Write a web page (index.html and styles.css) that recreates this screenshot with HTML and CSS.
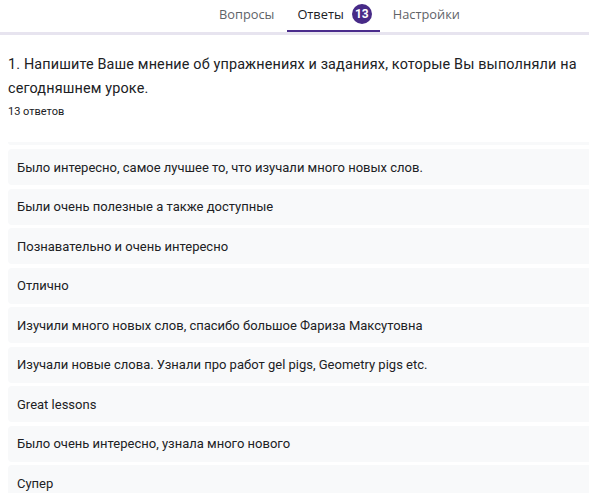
FILE: index.html
```html
<!DOCTYPE html>
<html lang="ru">
<head>
    <meta charset="utf-8">
    <title>Ответы</title>
    <meta name="viewport" content="width=device-width, initial-scale=1">
    <link rel="stylesheet" href="styles.css">
</head>
<body>
    <nav class="tabs">
        <div class="tab">Вопросы</div>
        <div class="tab tab-active">Ответы <span class="badge">13</span></div>
        <div class="tab">Настройки</div>
    </nav>

    <div class="content">
        <div class="question">
            <h2 class="question-title">1. Напишите Ваше мнение об упражнениях и заданиях, которые Вы выполняли на сегодняшнем уроке.</h2>
            <p class="answer-count">13 ответов</p>
        </div>

        <div class="answers">
            <div class="answers-edge"></div>
            <div class="answer">Было интересно, самое лучшее то, что изучали много новых слов.</div>
            <div class="answer">Были очень полезные а также доступные</div>
            <div class="answer">Познавательно и очень интересно</div>
            <div class="answer">Отлично</div>
            <div class="answer">Изучили много новых слов, спасибо большое Фариза Максутовна</div>
            <div class="answer">Изучали новые слова. Узнали про работ gel pigs, Geometry pigs etc.</div>
            <div class="answer">Great lessons</div>
            <div class="answer">Было очень интересно, узнала много нового</div>
            <div class="answer">Супер</div>
        </div>
    </div>
</body>
</html>
```

FILE: styles.css
```css
* {
    margin: 0;
    padding: 0;
    box-sizing: border-box;
}

body {
    font-family: Roboto, 'Liberation Sans', Arial, sans-serif;
    background: #ffffff;
    color: #202124;
    overflow: hidden;
}

.tabs {
    display: flex;
    align-items: stretch;
    gap: 3px;
    height: 35px;
    padding-left: 209px;
    border-bottom: 3px solid #e7e4ef;
}

.tab {
    display: flex;
    align-items: center;
    gap: 8px;
    padding: 0 10px 2px;
    font-family: 'Open Sans', Roboto, sans-serif;
    font-size: 12.8px;
    color: #5f6368;
    border-bottom: 2px solid transparent;
}

.tab-active {
    color: #202124;
    border-bottom-color: #4a2c8c;
    padding-right: 8px;
}

.badge {
    display: inline-flex;
    align-items: center;
    justify-content: center;
    width: 20px;
    height: 20px;
    border-radius: 50%;
    background: #472a87;
    color: #ffffff;
    font-family: Roboto, sans-serif;
    font-size: 12px;
    font-weight: 700;
}

.content {
    padding: 18px 0 0 8px;
}

.question-title {
    font-size: 14.4px;
    font-weight: 400;
    line-height: 24px;
    letter-spacing: 0.15px;
    color: #202124;
    padding-right: 4px;
}

.answer-count {
    font-size: 11px;
    line-height: 16px;
    margin-top: 3px;
    color: #202124;
}

.answers {
    margin-top: 22px;
    margin-right: -12px;
    display: flex;
    flex-direction: column;
    gap: 3.5px;
}

.answers-edge {
    height: 3px;
    background: #f8f9fa;
    border-radius: 0 0 4px 4px;
    margin-bottom: 0.5px;
}

.answer {
    height: 36px;
    display: flex;
    align-items: center;
    padding-left: 9px;
    background: #f8f9fa;
    border-radius: 4px;
    font-size: 13px;
    color: #202124;
}
```
